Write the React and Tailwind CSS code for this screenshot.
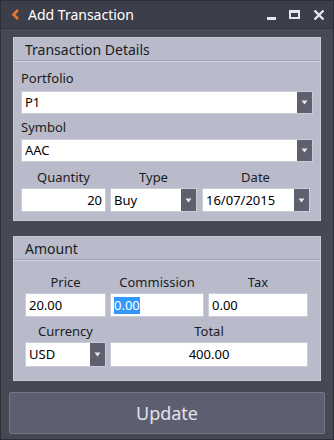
import React from 'react';

const font = { fontFamily: '"Segoe UI", "Noto Sans", "Open Sans", sans-serif' };

function Caret() {
    return (
        <div className="w-[15px] h-full bg-[#5e606f] flex items-center justify-center shrink-0">
            <svg width="7" height="5" viewBox="0 0 7 5">
                <path d="M0.5 0.5 L6.5 0.5 L3.5 4.5 Z" fill="#e8e8ee" />
            </svg>
        </div>
    );
}

function Select({ value, className = '' }) {
    return (
        <div className={`flex bg-white border border-[#cbccd5] ${className}`}>
            <div className="flex-1 px-[3px] pt-px flex items-center text-[13px] text-black">{value}</div>
            <Caret />
        </div>
    );
}

function Field({ value, align = 'left', selected = false, className = '' }) {
    return (
        <div className={`flex items-center bg-white border border-[#cbccd5] px-[3px] pt-px text-[13px] text-black ${align === 'right' ? 'justify-end' : align === 'center' ? 'justify-center' : 'justify-start'} ${className}`}>
            {selected ? <span className="bg-[#3399ff] text-white leading-[17px]">{value}</span> : value}
        </div>
    );
}

function Label({ children, center = false }) {
    return (
        <div className={`h-[22px] leading-[22px] text-[13px] text-[#1b1c22] ${center ? 'text-center' : ''}`}>
            {children}
        </div>
    );
}

function Panel({ title, children, className = '' }) {
    return (
        <div className={`bg-[#b9bbcb] border border-[#c7c9d5] ${className}`}>
            <div className="h-[24px] flex items-center px-[11px] text-[14px] text-[#1b1c22] border-b border-[#d2d4de] shadow-[0_-1px_0_#a5a7b8_inset]">
                {title}
            </div>
            {children}
        </div>
    );
}

export default function App() {
    return (
        <div style={font} className="w-[334px] h-[440px] bg-[#464855] border border-[#2d2e36] flex flex-col overflow-hidden">
            {/* TITLE BAR */}
            <div className="h-[28px] bg-[#3c3e4a] border-b border-[#34353f] flex items-center pl-[10px] pr-[8px] shrink-0">
                <svg width="9" height="11" viewBox="0 0 9 11" className="mr-[8px]">
                    <path d="M7 1 L2.5 5.5 L7 10" stroke="#e8762c" strokeWidth="2.6" fill="none" />
                </svg>
                <span className="text-[14px] text-white">Add Transaction</span>
                <div className="ml-auto flex items-center gap-[13px]">
                    <div className="w-[9px] h-[3px] bg-[#e6e7ee] mt-[7px]" />
                    <div className="w-[11px] h-[9px] border-2 border-t-[3px] border-[#e6e7ee]" />
                    <svg width="12" height="12" viewBox="0 0 12 12">
                        <path d="M1.5 1.5 L10.5 10.5 M10.5 1.5 L1.5 10.5" stroke="#e6e7ee" strokeWidth="2.4" />
                    </svg>
                </div>
            </div>

            <div className="flex-1 flex flex-col px-[12px] pt-[8px]">
                {/* TRANSACTION DETAILS */}
                <Panel title="Transaction Details" className="h-[184px]">
                    <div className="px-[7px] pt-[5px]">
                        <Label>Portfolio</Label>
                        <Select value="P1" className="h-[23px] mt-[2px]" />
                        <div className="mt-[2px]"><Label>Symbol</Label></div>
                        <Select value="AAC" className="h-[23px] mt-px" />
                        <div className="grid grid-cols-[85px_87px_109px] gap-x-[4px] mt-[4px]">
                            <Label center>Quantity</Label>
                            <Label center>Type</Label>
                            <Label center>Date</Label>
                            <Field value="20" align="right" className="h-[24px]" />
                            <Select value="Buy" className="h-[24px]" />
                            <Select value="16/07/2015" className="h-[24px] ml-px" />
                        </div>
                    </div>
                </Panel>

                {/* AMOUNT */}
                <Panel title="Amount" className="h-[145px] mt-[15px]">
                    <div className="px-[11px] pt-[10px]">
                        <div className="grid grid-cols-[81px_94px_100px] gap-x-[4px]">
                            <Label center>Price</Label>
                            <Label center>Commission</Label>
                            <Label center>Tax</Label>
                            <Field value="20.00" className="h-[24px]" />
                            <Field value="0.00" selected className="h-[24px]" />
                            <Field value="0.00" className="h-[24px]" />
                        </div>
                        <div className="grid grid-cols-[81px_198px] gap-x-[4px] mt-[3px]">
                            <Label center>Currency</Label>
                            <Label center>Total</Label>
                            <Select value="USD" className="h-[25px]" />
                            <Field value="400.00" align="center" className="h-[25px]" />
                        </div>
                    </div>
                </Panel>
            </div>

            {/* UPDATE */}
            <div className="px-[8px] pb-[5px] shrink-0">
                <button className="w-full h-[42px] bg-[#5d5f70] border border-[#757786] rounded-[2px] text-[18px] text-[#e2e3ea]">
                    Update
                </button>
            </div>
        </div>
    );
}
